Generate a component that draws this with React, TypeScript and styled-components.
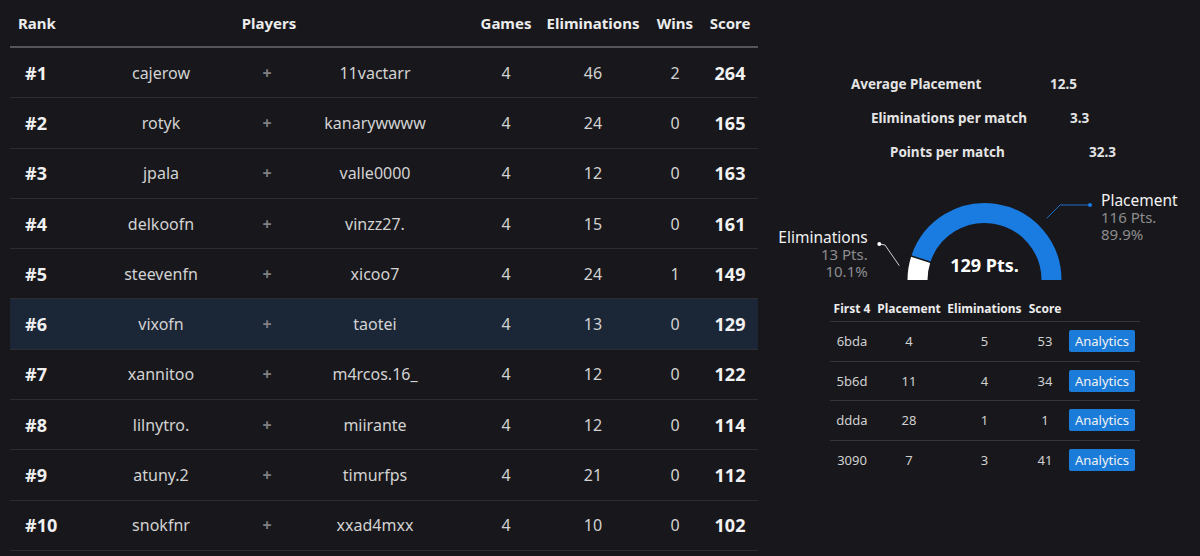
import * as React from "react";
import styled, { createGlobalStyle } from "styled-components";

const GlobalStyle = createGlobalStyle`
  html, body {
    margin: 0;
    padding: 0;
    background: #18181c;
    font-family: "Noto Sans", "Open Sans", sans-serif;
  }
`;

const players = [
  { rank: 1, a: "cajerow", b: "11vactarr", games: 4, elims: 46, wins: 2, score: 264 },
  { rank: 2, a: "rotyk", b: "kanarywwww", games: 4, elims: 24, wins: 0, score: 165 },
  { rank: 3, a: "jpala", b: "valle0000", games: 4, elims: 12, wins: 0, score: 163 },
  { rank: 4, a: "delkoofn", b: "vinzz27.", games: 4, elims: 15, wins: 0, score: 161 },
  { rank: 5, a: "steevenfn", b: "xicoo7", games: 4, elims: 24, wins: 1, score: 149 },
  { rank: 6, a: "vixofn", b: "taotei", games: 4, elims: 13, wins: 0, score: 129 },
  { rank: 7, a: "xannitoo", b: "m4rcos.16_", games: 4, elims: 12, wins: 0, score: 122 },
  { rank: 8, a: "lilnytro.", b: "miirante", games: 4, elims: 12, wins: 0, score: 114 },
  { rank: 9, a: "atuny.2", b: "timurfps", games: 4, elims: 21, wins: 0, score: 112 },
  { rank: 10, a: "snokfnr", b: "xxad4mxx", games: 4, elims: 10, wins: 0, score: 102 },
];

const matches = [
  { id: "6bda", placement: 4, elims: 5, score: 53 },
  { id: "5b6d", placement: 11, elims: 4, score: 34 },
  { id: "ddda", placement: 28, elims: 1, score: 1 },
  { id: "3090", placement: 7, elims: 3, score: 41 },
];

const stats = [
  { label: "Average Placement", value: "12.5", indent: 93 },
  { label: "Eliminations per match", value: "3.3", indent: 113 },
  { label: "Points per match", value: "32.3", indent: 132 },
];

const Page = styled.div`
  display: flex;
  width: 1200px;
  height: 556px;
  overflow: hidden;
`;

const Board = styled.div`
  width: 748px;
  margin-left: 10px;
  display: flex;
  flex-direction: column;
`;

const columns = "100px 102px 110px 106px 1fr 72px 102px 62px 48px";

const HeadRow = styled.div`
  display: grid;
  grid-template-columns: ${columns};
  padding-right: 4px;
  height: 46px;
  align-items: center;
  border-bottom: 2px solid #55565b;
  color: #ececec;
  font-weight: 700;
  font-size: 15px;
`;

const HeadCell = styled.div<{ $span?: string; $left?: boolean }>`
  grid-column: ${(p) => p.$span || "auto"};
  text-align: ${(p) => (p.$left ? "left" : "center")};
  padding-left: ${(p) => (p.$left ? "8px" : "0")};
  white-space: nowrap;
`;

const Row = styled.div<{ $active?: boolean }>`
  display: grid;
  grid-template-columns: ${columns};
  padding-right: 4px;
  height: 50.3px;
  box-sizing: border-box;
  align-items: center;
  border-bottom: 1px solid #2c2d31;
  background: ${(p) => (p.$active ? "#1b2637" : "transparent")};
  color: #d2d2d2;
  font-size: 16px;
`;

const Cell = styled.div<{ $gap?: boolean }>`
  text-align: center;
  white-space: nowrap;
  grid-column: ${(p) => (p.$gap ? "6" : "auto")};
`;

const Rank = styled.div`
  padding-left: 15px;
  font-weight: 700;
  font-size: 18px;
  color: #f0f0f0;
`;

const Plus = styled.div`
  text-align: center;
  color: #808084;
  font-weight: 700;
  font-size: 16px;
`;

const Score = styled.div`
  text-align: center;
  font-weight: 700;
  font-size: 18px;
  color: #f2f2f2;
`;

const Side = styled.div`
  flex: 1;
  display: flex;
  flex-direction: column;
  padding-top: 67px;
`;

const StatRow = styled.div<{ $indent: number }>`
  display: flex;
  align-items: center;
  height: 34px;
  padding-left: ${(p) => p.$indent}px;
  color: #e4e4e4;
  font-weight: 700;
  font-size: 13.5px;
`;

const StatLabel = styled.span`
  width: 199px;
  white-space: nowrap;
`;

const Gauge = styled.svg`
  display: block;
  margin: 16px 0 0 12px;
  width: 430px;
  height: 105px;
  overflow: visible;
`;

const MatchTable = styled.div`
  margin: 6px 0 0 72px;
  width: 310px;
  display: flex;
  flex-direction: column;
`;

const matchColumns = "44px 70px 81px 40px 1fr";

const MatchHead = styled.div`
  display: grid;
  grid-template-columns: ${matchColumns};
  height: 25px;
  align-items: center;
  border-bottom: 1px solid #34353a;
  color: #ececec;
  font-weight: 700;
  font-size: 12px;
`;

const MatchRow = styled.div<{ $last?: boolean }>`
  display: grid;
  grid-template-columns: ${matchColumns};
  height: 39.5px;
  box-sizing: border-box;
  align-items: center;
  border-bottom: ${(p) => (p.$last ? "none" : "1px solid #34353a")};
  color: #d0d0d0;
  font-size: 13px;
`;

const MatchCell = styled.div`
  text-align: center;
  white-space: nowrap;
`;

const AnalyticsButton = styled.button`
  justify-self: start;
  margin-left: 4px;
  width: 66px;
  height: 22px;
  padding: 0;
  border: none;
  border-radius: 2px;
  background: #1a7bd9;
  color: #f2f2f2;
  font-family: inherit;
  font-size: 13px;
  cursor: pointer;
`;

function GaugeChart() {
  const cx = 214.5;
  const cy = 95;
  const r = 67;
  const split = Math.PI * (1 - 0.101);
  const sx = cx + r * Math.cos(split);
  const sy = cy - r * Math.sin(split);
  const ix = cx + 56 * Math.cos(split);
  const iy = cy - 56 * Math.sin(split);
  const ox = cx + 78 * Math.cos(split);
  const oy = cy - 78 * Math.sin(split);

  return (
    <Gauge viewBox="0 0 430 105">
      <path
        d={`M ${cx - r} ${cy} A ${r} ${r} 0 0 1 ${sx} ${sy}`}
        stroke="#ffffff"
        strokeWidth={20}
        fill="none"
      />
      <path
        d={`M ${sx} ${sy} A ${r} ${r} 0 0 1 ${cx + r} ${cy}`}
        stroke="#1a7be0"
        strokeWidth={20}
        fill="none"
      />
      <line x1={ix} y1={iy} x2={ox} y2={oy} stroke="#18181c" strokeWidth={1.5} />

      <polyline points="276.7,33.3 290,20 320,20" stroke="#1a6fc4" strokeWidth={1} fill="none" />
      <circle cx={320} cy={20} r={2} fill="#1a7be0" />
      <text x={331} y={21} fill="#f2f2f2" fontSize={15.5}>Placement</text>
      <text x={331} y={38} fill="#8c8c8e" fontSize={15}>116 Pts.</text>
      <text x={331} y={55} fill="#8c8c8e" fontSize={15}>89.9%</text>

      <polyline points="109.3,59 115,60 129.3,80.7" stroke="#cfcfcf" strokeWidth={1} fill="none" />
      <circle cx={109.3} cy={59} r={2} fill="#ffffff" />
      <text x={97.7} y={58} fill="#f2f2f2" fontSize={15.5} textAnchor="end">Eliminations</text>
      <text x={97.7} y={75} fill="#8c8c8e" fontSize={15} textAnchor="end">13 Pts.</text>
      <text x={97.7} y={92} fill="#8c8c8e" fontSize={15} textAnchor="end">10.1%</text>

      <text x={cx} y={87} fill="#ffffff" fontSize={18} fontWeight={700} textAnchor="middle">
        129 Pts.
      </text>
    </Gauge>
  );
}

function App() {
  return (
    <Page>
      <GlobalStyle />
      <Board>
        <HeadRow>
          <HeadCell $left>Rank</HeadCell>
          <HeadCell $span="2 / 5">Players</HeadCell>
          <HeadCell $span="6">Games</HeadCell>
          <HeadCell>Eliminations</HeadCell>
          <HeadCell>Wins</HeadCell>
          <HeadCell>Score</HeadCell>
        </HeadRow>
        {players.map((p) => (
          <Row key={p.rank} $active={p.rank === 6}>
            <Rank>#{p.rank}</Rank>
            <Cell>{p.a}</Cell>
            <Plus>+</Plus>
            <Cell>{p.b}</Cell>
            <Cell $gap>{p.games}</Cell>
            <Cell>{p.elims}</Cell>
            <Cell>{p.wins}</Cell>
            <Score>{p.score}</Score>
          </Row>
        ))}
      </Board>

      <Side>
        {stats.map((s) => (
          <StatRow key={s.label} $indent={s.indent}>
            <StatLabel>{s.label}</StatLabel>
            <span>{s.value}</span>
          </StatRow>
        ))}

        <GaugeChart />

        <MatchTable>
          <MatchHead>
            <MatchCell>First 4</MatchCell>
            <MatchCell>Placement</MatchCell>
            <MatchCell>Eliminations</MatchCell>
            <MatchCell>Score</MatchCell>
          </MatchHead>
          {matches.map((m, i) => (
            <MatchRow key={m.id} $last={i === matches.length - 1}>
              <MatchCell>{m.id}</MatchCell>
              <MatchCell>{m.placement}</MatchCell>
              <MatchCell>{m.elims}</MatchCell>
              <MatchCell>{m.score}</MatchCell>
              <AnalyticsButton>Analytics</AnalyticsButton>
            </MatchRow>
          ))}
        </MatchTable>
      </Side>
    </Page>
  );
}

export default App;
